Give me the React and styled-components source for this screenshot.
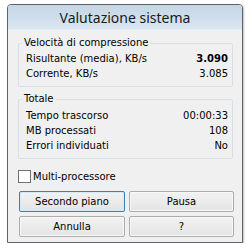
import React from 'react';
import styled, { createGlobalStyle } from 'styled-components';

const Global = createGlobalStyle`
  html, body {
    margin: 0;
    padding: 0;
    background: #ffffff;
  }
  body {
    font-family: "DejaVu Sans", sans-serif;
    font-size: 10px;
    color: #000;
  }
`;

const Window = styled.div`
  margin: 4px 0 0 7px;
  width: 236px;
  height: 239px;
  box-sizing: border-box;
  border: 1px solid #5f6368;
  border-radius: 4px 4px 0 0;
  background: #f0f0f0;
  box-shadow: 1px 1px 2px rgba(0, 0, 0, 0.25);
  display: flex;
  flex-direction: column;
  overflow: hidden;
`;

const Header = styled.div`
  height: 24px;
  flex-shrink: 0;
  background: linear-gradient(#c4d6e6, #dae6f1);
  border-bottom: 1px solid #e4ecf3;
  display: flex;
  align-items: center;
  justify-content: center;
  font-family: "Noto Sans", sans-serif;
  font-size: 14px;
  color: #1a1a1a;
`;

const Body = styled.div`
  padding: 6px 9px 0 10px;
  display: flex;
  flex-direction: column;
`;

const Group = styled.fieldset`
  margin: ${(p) => p.$top}px 0 0 0;
  padding: ${(p) => p.$padTop}px 4px 5px 7px;
  border: 1px solid #d8dfe4;
  border-radius: 2px;
  min-width: 0;
`;

const Legend = styled.legend`
  margin-left: -4px;
  padding: 0 2px;
  line-height: 14px;
`;

const Row = styled.div`
  display: flex;
  justify-content: space-between;
  line-height: 15px;
  height: 15px;
`;

const Value = styled.span`
  font-weight: ${(p) => (p.$bold ? 700 : 400)};
`;

const CheckRow = styled.label`
  margin-top: 10px;
  display: flex;
  align-items: center;
  gap: 2px;
  height: 14px;
`;

const Box = styled.span`
  width: 11px;
  height: 11px;
  border: 1px solid #707070;
  background: #ffffff;
`;

const Buttons = styled.div`
  margin-top: 8px;
  display: grid;
  grid-template-columns: 106px 105px;
  gap: 4px;
  padding-left: 1px;
`;

const Button = styled.div`
  height: 21px;
  box-sizing: border-box;
  border: 1px solid ${(p) => (p.$focus ? '#3c7fb1' : '#acacac')};
  box-shadow: inset 0 0 0 1px ${(p) => (p.$focus ? '#d4ecf9' : '#f8f8f8')};
  background: linear-gradient(#f2f2f2, #e4e4e4);
  border-radius: 2px;
  display: flex;
  align-items: center;
  justify-content: center;
`;

export default function App() {
  return (
    <>
      <Global />
      <Window>
        <Header>Valutazione sistema</Header>
        <Body>
          <Group $top={0} $padTop={1}>
            <Legend>Velocità di compressione</Legend>
            <Row>
              <span>Risultante (media), KB/s</span>
              <Value $bold>3.090</Value>
            </Row>
            <Row>
              <span>Corrente, KB/s</span>
              <Value>3.085</Value>
            </Row>
          </Group>
          <Group $top={5} $padTop={2}>
            <Legend>Totale</Legend>
            <Row>
              <span>Tempo trascorso</span>
              <Value>00:00:33</Value>
            </Row>
            <Row>
              <span>MB processati</span>
              <Value>108</Value>
            </Row>
            <Row>
              <span>Errori individuati</span>
              <Value>No</Value>
            </Row>
          </Group>
          <CheckRow>
            <Box />
            Multi-processore
          </CheckRow>
          <Buttons>
            <Button $focus>Secondo piano</Button>
            <Button>Pausa</Button>
            <Button>Annulla</Button>
            <Button>?</Button>
          </Buttons>
        </Body>
      </Window>
    </>
  );
}
